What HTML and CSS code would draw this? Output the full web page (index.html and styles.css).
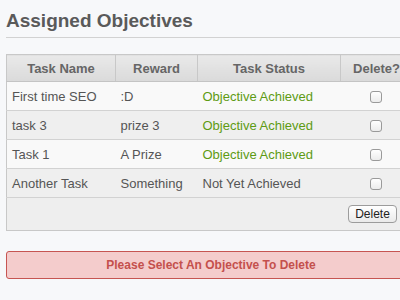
FILE: index.html
```html
<!DOCTYPE html>
<html>
<head>
<meta charset="utf-8">
<link rel="stylesheet" href="styles.css">
</head>
<body>
<div class="page">
  <h1 class="title">Assigned Objectives</h1>
  <div class="rule"></div>
  <table class="objectives">
    <colgroup>
      <col class="c-name"><col class="c-reward"><col class="c-status"><col class="c-del">
    </colgroup>
    <thead>
      <tr><th>Task Name</th><th>Reward</th><th>Task Status</th><th>Delete?</th></tr>
    </thead>
    <tbody>
      <tr class="odd"><td>First time SEO</td><td>:D</td><td class="done">Objective Achieved</td><td class="chk"><input type="checkbox"></td></tr>
      <tr class="even"><td>task 3</td><td>prize 3</td><td class="done">Objective Achieved</td><td class="chk"><input type="checkbox"></td></tr>
      <tr class="odd"><td>Task 1</td><td>A Prize</td><td class="done">Objective Achieved</td><td class="chk"><input type="checkbox"></td></tr>
      <tr class="even"><td>Another Task</td><td>Something</td><td>Not Yet Achieved</td><td class="chk"><input type="checkbox"></td></tr>
    </tbody>
    <tfoot>
      <tr><td colspan="4" class="foot"><button class="btn">Delete</button></td></tr>
    </tfoot>
  </table>
  <div class="alert">Please Select An Objective To Delete</div>
</div>
</body>
</html>
```
FILE: styles.css
```css
html, body {
  margin: 0;
  padding: 0;
  background: #f7f8fa;
  overflow: hidden;
}
body {
  font-family: "Liberation Sans", Arial, sans-serif;
  color: #555;
  width: 400px;
  height: 300px;
}
.page {
  padding: 0 0 0 6px;
  width: 420px;
}
.title {
  margin: 0;
  padding-top: 9px;
  height: 28px;
  font-size: 19px;
  font-weight: bold;
  color: #5a5a5a;
  line-height: 24px;
}
.rule {
  height: 1px;
  background: #d2d2d2;
  margin-bottom: 16px;
}
.objectives {
  border-collapse: collapse;
  width: 406px;
  table-layout: fixed;
  border: 1px solid #c8c8c8;
  font-size: 13px;
}
.c-name { width: 109px; }
.c-reward { width: 82px; }
.c-status { width: 143px; }
.c-del { width: 72px; }
.objectives th {
  height: 26px;
  padding: 0;
  background: linear-gradient(#e9e9e9, #dadada);
  color: #666;
  font-weight: bold;
  border-left: 1px solid #c8c8c8;
  border-bottom: 1px solid #c4c4c4;
  text-align: center;
}
.objectives th:first-child { border-left: none; }
.objectives td {
  height: 28px;
  padding: 0 0 0 5px;
  border-bottom: 1px solid #d2d2d2;
  white-space: nowrap;
}
.objectives tr.odd td { background: #f9f9f9; }
.objectives tr.even td { background: #efefef; }
.objectives td.done { color: #5e9b13; }
.objectives td.chk { text-align: center; padding: 0; }
.chk input {
  appearance: none;
  -webkit-appearance: none;
  width: 12px;
  height: 12px;
  margin: 0;
  vertical-align: middle;
  border: 1px solid #9a9a9a;
  border-radius: 3px;
  background: linear-gradient(#ffffff, #ececec);
}
.objectives td.foot {
  height: 32px;
  background: #eeeeee;
  text-align: right;
  padding: 0 15px 0 0;
  border-bottom: 1px solid #c8c8c8;
}
.btn {
  font-family: "Liberation Sans", Arial, sans-serif;
  font-size: 12px;
  color: #222;
  height: 18px;
  width: 49px;
  padding: 0;
  border: 1px solid #9c9c9c;
  border-radius: 4px;
  background: linear-gradient(#ffffff, #eaeaea);
  vertical-align: middle;
}
.alert {
  margin-top: 20px;
  width: 408px;
  height: 26px;
  line-height: 26px;
  background: #f4cccc;
  border: 1px solid #c65552;
  border-radius: 3px;
  color: #c4504c;
  font-weight: bold;
  font-size: 12px;
  text-align: center;
}
```
